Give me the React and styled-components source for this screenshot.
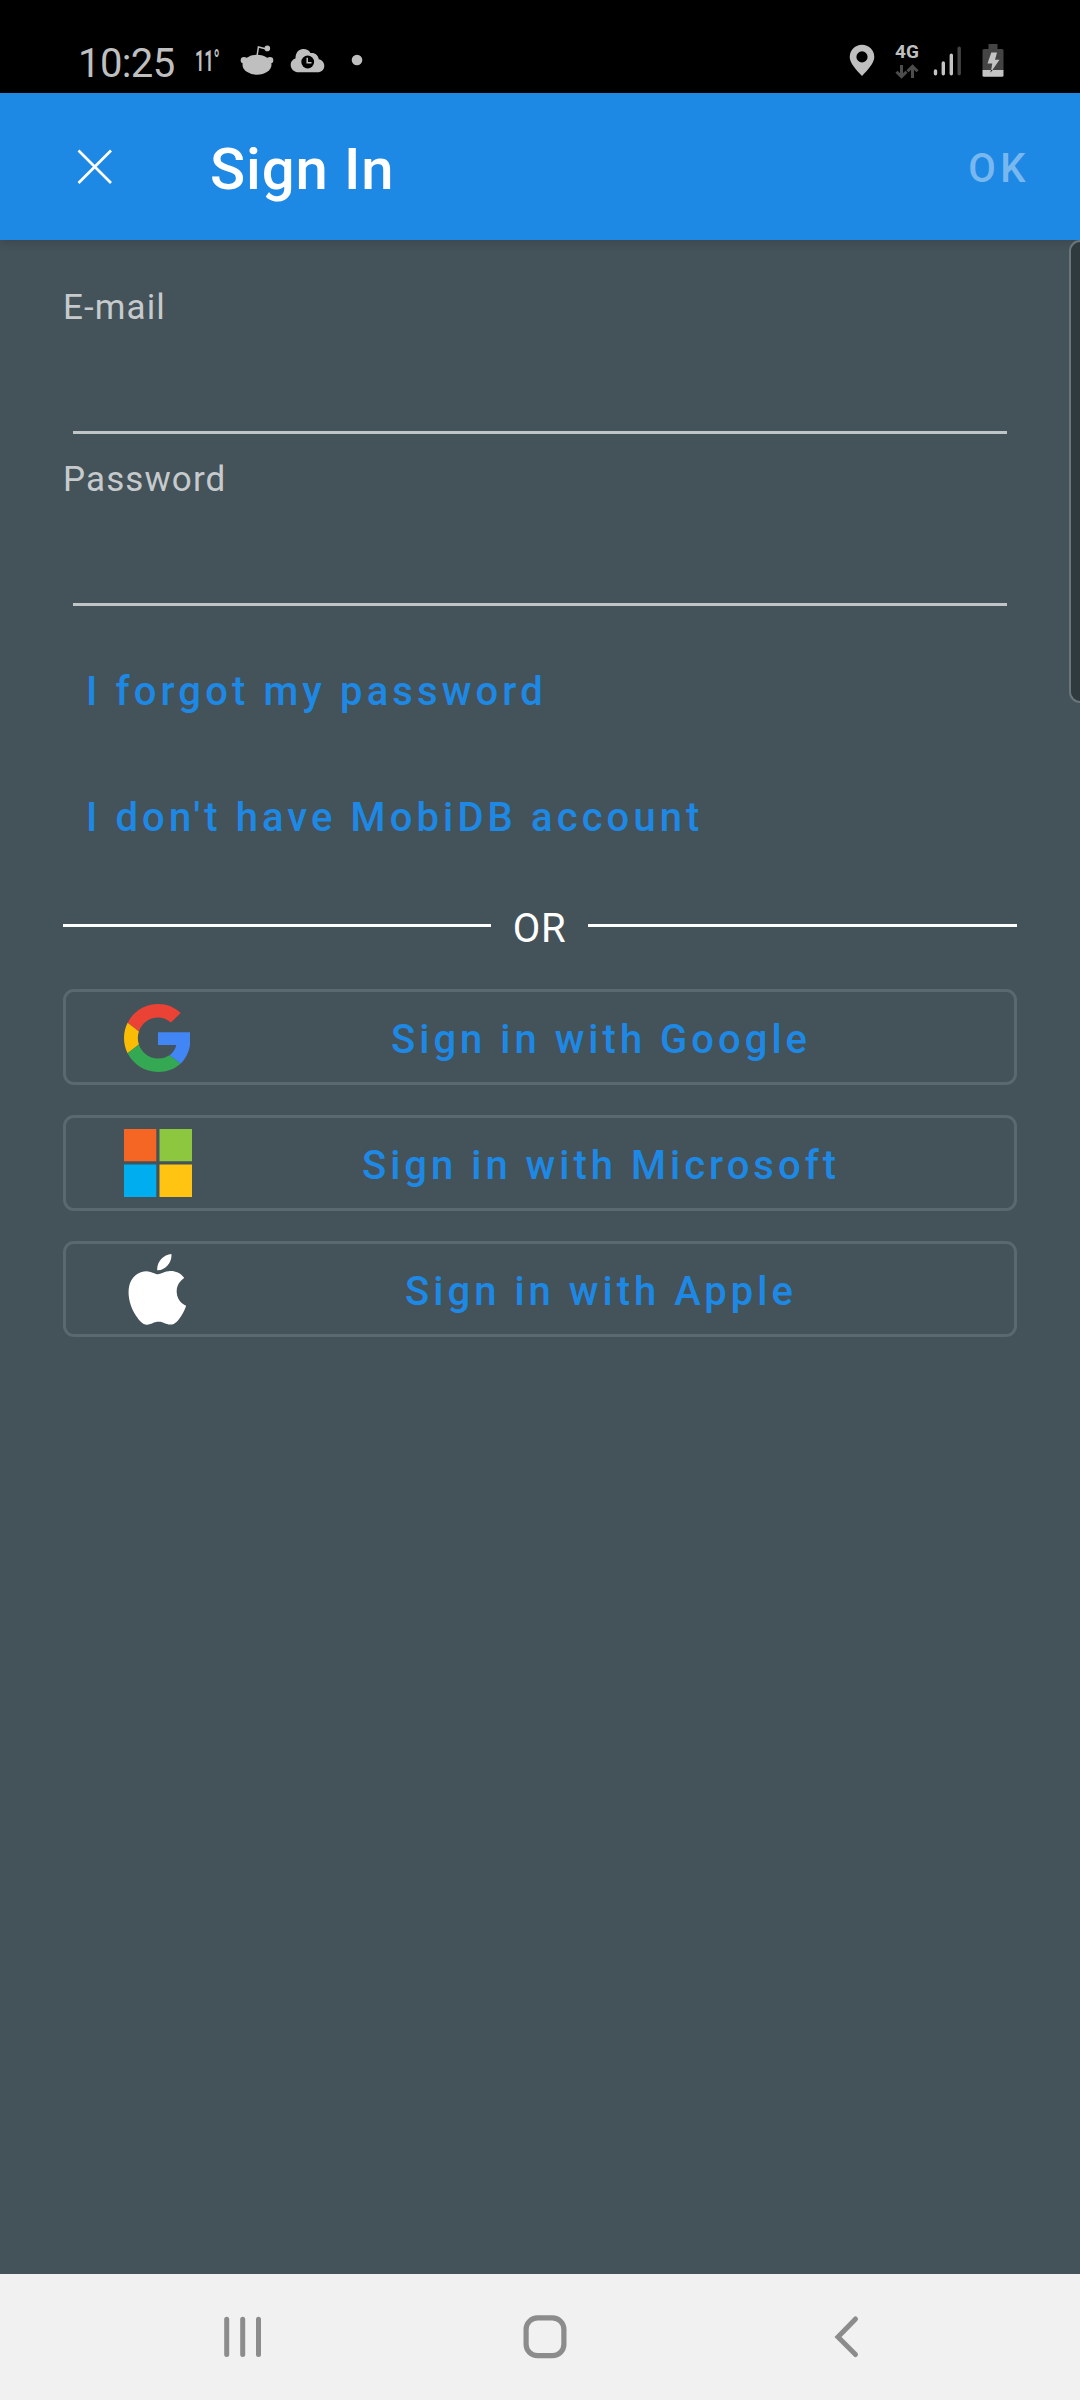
import React from "react";
import styled, { createGlobalStyle } from "styled-components";

const GlobalStyle = createGlobalStyle`
  * { box-sizing: border-box; }
  body { margin: 0; background: #445259; font-family: Roboto, "Liberation Sans", sans-serif; }
  button { font-family: inherit; border: 0; padding: 0; background: none; }
  svg { display: block; flex: none; }
`;

const Screen = styled.div`
  position: relative;
  width: 1080px;
  height: 2400px;
  display: flex;
  flex-direction: column;
  overflow: hidden;
  background: #445259;
`;

const StatusBar = styled.header`
  height: 93px;
  flex: none;
  display: flex;
  align-items: flex-start;
  justify-content: space-between;
  padding: 40px 76px 0 78px;
  background: #000;
  color: #bfbfbf;
`;

const StatusGroup = styled.div`
  display: flex;
  align-items: flex-start;
`;

const Clock = styled.span`
  width: 117px;
  padding-top: 1px;
  font-size: 40px;
  line-height: 45px;
  letter-spacing: -0.6px;
  white-space: nowrap;
`;

const Temperature = styled.span`
  width: 45px;
  font-size: 30px;
  font-weight: 700;
  line-height: 42px;
  white-space: nowrap;
  transform: scaleX(0.54);
  transform-origin: left;
`;

const Network = styled.div`
  width: 24px;
  margin: 4px 14px 0 20px;
  display: flex;
  flex-direction: column;
  align-items: center;
  gap: 4px;
  font-size: 19px;
  font-weight: 700;
  line-height: 16px;
`;

const AppBar = styled.div`
  height: 147px;
  flex: none;
  display: flex;
  align-items: center;
  padding: 0 50px 0 77px;
  background: #1e88e5;
  color: #fff;
  box-shadow: 0 1px 10px rgba(0, 0, 0, 0.18);
`;

const CloseButton = styled.button`
  width: 133px;
`;

const Title = styled.h1`
  flex: 1;
  margin: 0;
  padding-top: 4px;
  font-size: 58px;
  font-weight: 500;
  line-height: 68px;
  letter-spacing: 0.9px;
`;

const OkButton = styled.button`
  padding-top: 4px;
  color: #78b8ef;
  font-size: 40px;
  font-weight: 500;
  line-height: 48px;
  letter-spacing: 4.4px;
`;

const Form = styled.main`
  flex: 1;
  display: flex;
  flex-direction: column;
  padding: 46px 63px 0;
`;

const Field = styled.label`
  display: flex;
  flex-direction: column;
  margin-bottom: ${(p) => (p.$last ? 37 : 24)}px;
`;

const FieldLabel = styled.span`
  height: 41px;
  color: #c6cacc;
  font-size: 35px;
  line-height: 44px;
  letter-spacing: 1.1px;
`;

const FieldInput = styled.input`
  height: 107px;
  margin: 0 10px;
  padding: 0;
  border: 0;
  border-bottom: 3px solid #c0c5c7;
  border-radius: 0;
  background: transparent;
  color: #fff;
  font: 40px Roboto, sans-serif;
  outline: none;
`;

const LinkButton = styled.button`
  height: 96px;
  align-self: flex-start;
  padding: 0 22px 0 23px;
  margin-bottom: ${(p) => (p.$last ? 33 : 30)}px;
  color: #1e88e5;
  font-size: 40px;
  font-weight: 500;
  line-height: 98px;
  letter-spacing: 4.1px;
  white-space: nowrap;
`;

const Divider = styled.div`
  height: 55px;
  margin-bottom: 36px;
  display: flex;
  align-items: center;
  color: #fff;
`;

const Rule = styled.span`
  flex: ${(p) => p.$grow};
  height: 3px;
  background: #fff;
`;

const DividerText = styled.span`
  width: 97px;
  padding-top: 7px;
  text-align: center;
  font-size: 40px;
  line-height: 48px;
  letter-spacing: 0.6px;
`;

const Providers = styled.div`
  display: flex;
  flex-direction: column;
  gap: 30px;
`;

const ProviderButton = styled.button`
  height: 96px;
  display: flex;
  align-items: center;
  padding: 0 6px 0 54px;
  border: 3px solid #5a686f;
  border-radius: 11px;
  color: #1e88e5;
  font-size: 40px;
  font-weight: 500;
  letter-spacing: 4px;
`;

const LogoSlot = styled.span`
  width: 74px;
  padding: ${(p) => p.$pad};
  display: flex;
  justify-content: center;
`;

const ProviderLabel = styled.span`
  flex: 1;
  padding-top: 6px;
  text-align: center;
  line-height: 48px;
  white-space: nowrap;
`;

const EdgePanel = styled.div`
  position: absolute;
  top: 240px;
  right: -12px;
  width: 23px;
  height: 463px;
  border: 2px solid #69757b;
  border-radius: 11px;
  background: #2f3a3f;
`;

const NavBar = styled.nav`
  height: 126px;
  flex: none;
  display: flex;
  align-items: center;
  padding: 0 0 0 222px;
  background: #f1f1f1;
`;

const NavButton = styled.button`
  height: 44px;
  margin-right: ${(p) => p.$gap}px;
`;

const RedditIcon = () => (
  <svg width="34" height="30" viewBox="0 0 34 30" fill="#bfbfbf">
    <path d="M17 11.5 18.4 2l8 2" fill="none" stroke="#bfbfbf" strokeWidth="1.5" />
    <circle cx="27.3" cy="3.4" r="2.8" />
    <circle cx="4" cy="15.3" r="3.3" />
    <circle cx="30" cy="15.3" r="3.3" />
    <ellipse cx="17" cy="19.8" rx="14.5" ry="10" />
  </svg>
);

const CloudClockIcon = () => (
  <svg width="35" height="25" viewBox="0 0 35 25">
    <path
      d="M9 24.3C4 24.3.7 21 .7 17c0-3.700 2.300-5.900 4.800-6.600C5.500 4.600 8.600 1 13.200 1c3.500 0 6 1.600 7.300 4 4.200-.7 7.800 2 8.300 6.200 3.200.6 5.500 3.200 5.500 6.500 0 3.800-2.800 6.600-7 6.600z"
      fill="#bfbfbf"
    />
    <circle cx="17.700" cy="14" r="6.400" />
    <path d="M17.200 9.800v5h4.300" fill="none" stroke="#bfbfbf" strokeWidth="1.500" />
  </svg>
);

const Dot = () => (
  <svg width="12" height="12" viewBox="0 0 12 12">
    <circle cx="6" cy="6" r="5.300" fill="#bfbfbf" />
  </svg>
);

const PinIcon = () => (
  <svg width="26" height="33" viewBox="0 0 26 33">
    <path
      fillRule="evenodd"
      fill="#bfbfbf"
      d="M13 .7A12.300 12.300 0 0 0 .7 13C.7 19 7 25.500 13 32c6-6.500 12.300-13 12.300-19A12.300 12.300 0 0 0 13 .7zM13 7.300a5.600 5.600 0 1 1 0 11.200 5.600 5.600 0 0 1 0-11.200z"
    />
  </svg>
);

const DataArrows = () => (
  <svg width="24" height="15" viewBox="0 0 24 15" fill="none" stroke="#4d4d4d" strokeWidth="3">
    <path d="M6.500 1v11M1.500 7.700l5 5 5-5M17.500 14V3M12.500 7.300l5-5 5 5" />
  </svg>
);

const SignalIcon = () => (
  <svg width="28" height="31" viewBox="0 0 28 31" strokeWidth="3.400" strokeLinecap="round" stroke="#c4c4c4">
    <path d="M2.500 25v2.700M10.300 17v10.700M18.300 9.300v18.400" />
    <path d="M26.200 2.300v25.400" stroke="#444" />
  </svg>
);

const BatteryIcon = () => (
  <svg width="22" height="33" viewBox="0 0 22 33">
    <path d="M6.500 0h9v5H20a1.500 1.500 0 0 1 1.500 1.500V26h-21V6.500A1.500 1.500 0 0 1 2 5h4.500z" fill="#444" />
    <path d="M.5 26h21v5.200a1.500 1.500 0 0 1-1.500 1.500H2A1.500 1.500 0 0 1 .5 31.200z" fill="#c4c4c4" />
    <path d="M9.300 8.500h5.700l-2 7.200h4.500L8.800 28.200l1.500-8.700H5.500z" fill="#c4c4c4" />
    <path d="M8.200 28.800 9 26h1.700z" fill="#222" />
  </svg>
);

const CloseIcon = () => (
  <svg width="36" height="36" viewBox="0 0 36 36" stroke="#fff" strokeWidth="2.700">
    <path d="M1.500 1.500l32.500 32.500M34 1.500L1.500 34" />
  </svg>
);

const GoogleLogo = () => (
  <svg width="66.500" height="68" viewBox="0 0 47 48">
    <path fill="#ea4335" d="M24 9.500c3.540 0 6.710 1.220 9.210 3.600l6.850-6.850C35.900 2.380 30.470 0 24 0 14.620 0 6.510 5.380 2.560 13.220l7.980 6.190C12.430 13.720 17.740 9.500 24 9.500z" />
    <path fill="#4285f4" d="M46.980 24.550c0-1.570-.15-3.090-.38-4.550H24v9.020h12.940c-.58 2.960-2.260 5.480-4.780 7.180l7.730 6c4.510-4.180 7.090-10.360 7.090-17.650z" />
    <path fill="#fbbc05" d="M10.530 28.590c-.48-1.450-.76-2.990-.76-4.590s.27-3.140.76-4.590l-7.980-6.190C.92 16.460 0 20.120 0 24c0 3.880.92 7.540 2.560 10.780l7.970-6.190z" />
    <path fill="#34a853" d="M24 48c6.480 0 11.930-2.130 15.890-5.810l-7.730-6c-2.150 1.450-4.920 2.300-8.160 2.300-6.260 0-11.570-4.220-13.470-9.910l-7.980 6.190C6.510 42.620 14.620 48 24 48z" />
  </svg>
);

const MicrosoftLogo = () => (
  <svg width="68" height="68" viewBox="0 0 68 68">
    <path fill="#f56625" d="M0 0h32.300v32.300H0z" />
    <path fill="#8dc740" d="M35.500 0H68v32.300H35.500z" />
    <path fill="#00adef" d="M0 35.500h32.300V68H0z" />
    <path fill="#ffc311" d="M35.500 35.500H68V68H35.500z" />
  </svg>
);

const AppleLogo = () => (
  <svg width="70.700" height="70.700" viewBox="0 0 24 24" fill="#fff">
    <path d="M12.152 6.896c-.948 0-2.415-1.078-3.960-1.040-2.040.027-3.910 1.183-4.961 3.014-2.117 3.675-.546 9.103 1.519 12.090 1.013 1.454 2.208 3.090 3.792 3.039 1.520-.065 2.090-.987 3.935-.987 1.831 0 2.350.987 3.960.948 1.637-.026 2.676-1.480 3.676-2.948 1.156-1.688 1.636-3.325 1.662-3.415-.039-.013-3.182-1.221-3.220-4.857-.026-3.040 2.480-4.494 2.597-4.559-1.429-2.090-3.623-2.324-4.390-2.376-2-.156-3.675 1.090-4.610 1.090zM15.530 3.830c.843-1.012 1.400-2.427 1.245-3.830-1.207.052-2.662.805-3.532 1.818-.78.896-1.454 2.338-1.273 3.714 1.338.104 2.715-.688 3.559-1.701" />
  </svg>
);

const RecentsIcon = () => (
  <svg width="42" height="44" viewBox="0 0 42 44" stroke="#8c8c8c" strokeWidth="5" strokeLinecap="round">
    <path d="M4.700 4.200v35.400M20.700 4.200v35.400M36.500 4.200v35.400" />
  </svg>
);

const HomeIcon = () => (
  <svg width="44" height="44" viewBox="0 0 44 44" fill="none" stroke="#8c8c8c" strokeWidth="5.200">
    <rect x="3.100" y="2.900" width="37.800" height="37.800" rx="11.500" />
  </svg>
);

const BackIcon = () => (
  <svg width="28" height="44" viewBox="0 0 28 44" fill="none" stroke="#8c8c8c" strokeWidth="5" strokeLinecap="round">
    <path d="M22.500 4L5 21.900l17.500 17.600" />
  </svg>
);

const IconBox = styled.span`
  display: block;
  margin: ${(p) => p.$m};
`;

const fields = [
  { label: "E-mail", type: "email" },
  { label: "Password", type: "password" },
];

const providers = [
  { name: "Google", Logo: GoogleLogo, pad: "1px 0 0" },
  { name: "Microsoft", Logo: MicrosoftLogo, pad: "0 0 1px 2px" },
  { name: "Apple", Logo: AppleLogo, pad: "1px 0 0" },
];

export default function App() {
  return (
    <>
      <GlobalStyle />
      <Screen>
        <StatusBar>
          <StatusGroup>
            <Clock>10:25</Clock>
            <Temperature>11°</Temperature>
            <IconBox $m="5px 0 0 0"><RedditIcon /></IconBox>
            <IconBox $m="8px 0 0 16px"><CloudClockIcon /></IconBox>
            <IconBox $m="14px 0 0 26px"><Dot /></IconBox>
          </StatusGroup>
          <StatusGroup>
            <IconBox $m="4px 0 0 0"><PinIcon /></IconBox>
            <Network>
              <span>4G</span>
              <DataArrows />
            </Network>
            <IconBox $m="6px 0 0 0"><SignalIcon /></IconBox>
            <IconBox $m="4px 0 0 21px"><BatteryIcon /></IconBox>
          </StatusGroup>
        </StatusBar>
        <AppBar>
          <CloseButton aria-label="Close"><CloseIcon /></CloseButton>
          <Title>Sign In</Title>
          <OkButton>OK</OkButton>
        </AppBar>
        <Form>
          {fields.map((f, i) => (
            <Field key={f.label} $last={i === fields.length - 1}>
              <FieldLabel>{f.label}</FieldLabel>
              <FieldInput type={f.type} />
            </Field>
          ))}
          <LinkButton>I forgot my password</LinkButton>
          <LinkButton $last>I don't have MobiDB account</LinkButton>
          <Divider>
            <Rule $grow={428} />
            <DividerText>OR</DividerText>
            <Rule $grow={429} />
          </Divider>
          <Providers>
            {providers.map(({ name, Logo, pad }) => (
              <ProviderButton key={name}>
                <LogoSlot $pad={pad}><Logo /></LogoSlot>
                <ProviderLabel>Sign in with {name}</ProviderLabel>
              </ProviderButton>
            ))}
          </Providers>
        </Form>
        <NavBar>
          <NavButton $gap={259} aria-label="Recents"><RecentsIcon /></NavButton>
          <NavButton $gap={266} aria-label="Home"><HomeIcon /></NavButton>
          <NavButton $gap={0} aria-label="Back"><BackIcon /></NavButton>
        </NavBar>
        <EdgePanel />
      </Screen>
    </>
  );
}
